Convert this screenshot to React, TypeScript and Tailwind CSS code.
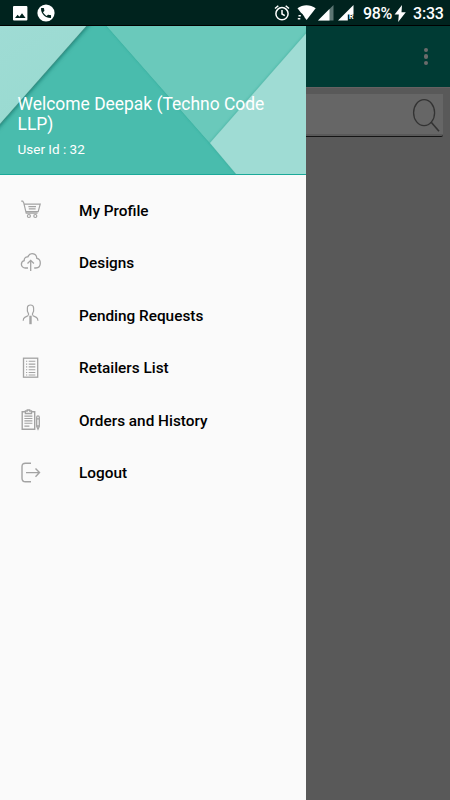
import React from 'react';

interface MenuItem {
  label: string;
  icon: React.ReactNode;
}

const iconProps = {
  width: 22,
  height: 22,
  viewBox: '0 0 22 22',
  fill: 'none',
  stroke: '#a3a3a3',
  strokeWidth: 1.1,
};

const CartIcon = () => (
  <svg {...iconProps} strokeWidth={1.2}>
    <path d="M1.2 2.2h1.500l1 1.500L6.200 14.100h11.400M4 5.100h16.200l-2 7.600H5.600" />
    <path d="M8.400 7.700h7.600M8.800 9.900h6.800" />
    <circle cx="8.9" cy="17" r="1.5" />
    <circle cx="15.3" cy="17" r="1.5" />
  </svg>
);

const CloudIcon = () => (
  <svg {...iconProps} strokeWidth={1.3}>
    <path d="M8 16H5.3C3 16 1.4 14.3 1.4 12.3c0-1.9 1.1-3.2 2.8-3.600-.2-2.400 1.300-4 3.600-3.800C8.700 2.800 10.200 1.700 12 1.700c2.800 0 4.600 1.900 4.900 4.700 2.100.4 3.400 2.300 3.400 4.600 0 2.900-1.800 5-4.500 5h-1.600" />
    <path d="M10.7 19V8.500M7.500 11.500l3.200-3.200 3.200 3.200" />
  </svg>
);

const PersonIcon = () => (
  <svg {...iconProps} strokeWidth={1.2}>
    <path d="M8.500 11.300V9.700L7.400 7.200V3.900C7.400 2 8.600 1 10.500 1s3.100 1 3.100 2.900v3.300l-1.100 2.500v1.600" />
    <path d="M8.400 11.500 4.800 13.400C3.700 14 3.200 15 3.200 16.800M12.600 11.500l3.700 1.900c1.100.6 1.600 1.600 1.600 3.400" />
    <path d="M10.500 11.700v8.500" strokeWidth="2.400" />
  </svg>
);

const ListIcon = () => (
  <svg {...iconProps}>
    <rect x="3.5" y="1.2" width="14.2" height="19" strokeWidth="1.3" />
    <path d="M8.7 4.3h6.6M8.7 7.1h6.6M8.7 9.9h6.6M8.7 12.7h6.6M8.7 15.5h6.6M8.7 18h6.6" />
    <path d="M6 4.3h1.2M6 7.1h1.2M6 9.9h1.2M6 12.7h1.2M6 15.5h1.2M6 18h1.2" />
  </svg>
);

const ClipboardIcon = () => (
  <svg {...iconProps}>
    <path d="M5.4 2.7H2.2v17.5h12.5V2.7h-3.2" strokeWidth="1.4" />
    <path d="M5.4 4.5V2h1.8V1h2.5v1h1.8v2.5z" strokeWidth="1.3" />
    <path d="M4.4 7.1h8M4.4 9.5h8M4.4 11.9h8M4.4 14.3h8M4.4 17.1h5" />
    <path d="M16.7 17.4V8.2c0-.8.5-1.3 1.3-1.3s1.3.5 1.3 1.3v9.2L18 20.2zM16.7 9.8h2.6M16.7 17h2.6" strokeWidth="1.3" />
  </svg>
);

const LogoutIcon = () => (
  <svg {...iconProps} strokeWidth={1.4}>
    <path d="M11 1.2H5.5C3.2 1.2 2 2.4 2 4.7v11.5c0 2.3 1.2 3.5 3.5 3.5H11" />
    <path d="M6 10.6h13.4M15.5 6.5l4 4.1-4 4.1" />
  </svg>
);

const menuItems: MenuItem[] = [
  { label: 'My Profile', icon: <CartIcon /> },
  { label: 'Designs', icon: <CloudIcon /> },
  { label: 'Pending Requests', icon: <PersonIcon /> },
  { label: 'Retailers List', icon: <ListIcon /> },
  { label: 'Orders and History', icon: <ClipboardIcon /> },
  { label: 'Logout', icon: <LogoutIcon /> },
];

const StatusBar: React.FC = () => (
  <div className="flex h-[26px] items-center border-b border-black bg-[#00231e] pr-[7px] pl-[13px] text-white">
    <svg width="15" height="15" viewBox="0 0 15 15" className="mt-[1px]">
      <rect width="14.4" height="14.6" rx="1" fill="#fff" />
      <path d="M2 12 4.6 8.7l1.8 2 2.6-3.4 3.6 4.7z" fill="#00231e" />
    </svg>
    <svg width="18" height="18" viewBox="0 0 18 18" className="mt-[1px] ml-[9px]">
      <circle cx="9" cy="9" r="8.6" fill="#fff" />
      <path
        transform="translate(2.3 2.3) scale(.56)"
        d="M6.6 10.8c1.4 2.8 3.8 5.1 6.6 6.6l2.2-2.2c.3-.3.7-.4 1-.2 1.1.4 2.3.6 3.6.6.6 0 1 .4 1 1V20c0 .6-.4 1-1 1C10.6 21 3 13.4 3 4c0-.6.4-1 1-1h3.5c.6 0 1 .4 1 1 0 1.2.2 2.4.6 3.6.1.3 0 .7-.2 1z"
        fill="#00231e"
      />
    </svg>
    <div className="flex-1" />
    <svg width="16" height="18" viewBox="0 0 16 18" fill="none" stroke="#fff" strokeWidth="1.5">
      <circle cx="8" cy="9.7" r="6.1" />
      <path d="M8 6v4l2.8 1.7M1 4.5 4.3 1.7M15 4.5l-3.3-2.8" />
    </svg>
    <svg width="19" height="16" viewBox="0 0 19 16" fill="#fff" className="mt-[1px] ml-[7px]">
      <path d="M.5 3.3C5.8-.9 13.2-.9 18.7 3.3L9.6 15z" />
      <path d="M0 8.5h5l2.5 3.5L5 15H0z" fill="#00231e" />
      <path d="M1.5 10h2.3v1.4H1.5zM.8 13h2.5v1.4H.8z" />
    </svg>
    <svg width="16" height="16" viewBox="0 0 16 16" className="mt-[1px] ml-[2px]">
      <path d="M15.5 0v15.5H0z" fill="#5c7673" />
      <path d="M11.5 4v11.5H0z" fill="#fff" />
    </svg>
    <svg width="17" height="16" viewBox="0 0 17 16" className="mt-[1px] ml-[4px]">
      <path d="M15.5 0v15.5H0z" fill="#fff" />
      <path d="M9.8 9.5H17V16H9.8z" fill="#00231e" />
    </svg>
    <span className="mt-[10px] -ml-[6px] w-[6px] text-[7px] leading-[7px] font-bold">R</span>
    <span className="mt-[2px] ml-[8px] w-[30px] text-[16px] leading-[18px] font-medium tracking-[-0.3px]">98%</span>
    <svg width="13" height="17" viewBox="0 0 13 17" fill="#fff" className="mt-[1px] ml-[1px]">
      <path d="M8 0 .6 9.6h4.2L4.2 17l7.6-9.8H7.5z" />
    </svg>
    <span className="mt-[2px] ml-[6px] w-[30px] text-[16px] leading-[18px] font-medium tracking-[-0.2px]">3:33</span>
  </div>
);

const DrawerHeader: React.FC = () => (
  <div className="relative h-[149px] overflow-hidden border-b border-[#1ba999] bg-[#49bcad]">
    <svg className="absolute inset-0" width="306" height="149" viewBox="0 0 306 149">
      <defs>
        <filter id="shadow" x="-20%" y="-20%" width="140%" height="140%">
          <feDropShadow dx="1" dy="1" stdDeviation="2" floodColor="#0d6258" floodOpacity="0.75" />
        </filter>
        <filter id="soft" x="-20%" y="-20%" width="140%" height="140%">
          <feDropShadow dx="-1" dy="0" stdDeviation="1.3" floodColor="#2aa392" floodOpacity="0.5" />
        </filter>
        <linearGradient id="light" x1="0" y1="0" x2="0.5" y2="1">
          <stop offset="0" stopColor="#a0dcd5" />
          <stop offset="1" stopColor="#98dad0" />
        </linearGradient>
      </defs>
      <path d="M106 -1H308V60L210 117z" fill="#6ac9bb" filter="url(#soft)" />
      <path d="M106 -1H308L306 8L210 117z" fill="#6ac9bb" />
      <path d="M310 3V155H242L210 117z" fill="#9fdcd4" filter="url(#soft)" />
      <path d="M-10 -10H95L-10 109z" fill="url(#light)" filter="url(#shadow)" />
    </svg>
    <div className="relative pt-[68px] pl-[17.5px] text-white">
      <p className="w-[260px] text-[17.45px] leading-[20px]">Welcome Deepak (Techno Code LLP)</p>
      <p className="mt-[7px] text-[13.5px] leading-4">User Id : 32</p>
    </div>
  </div>
);

const App: React.FC = () => {
  return (
    <div className="relative h-[800px] w-[450px] overflow-hidden bg-[#595959] font-['Roboto',sans-serif]">
      <StatusBar />

      {/* Dimmed page */}
      <div className="flex h-[61px] items-center justify-end bg-[#003b34] pr-[22px]">
        <div className="flex flex-col gap-[2px]">
          <span className="h-[4.5px] w-[4.5px] rounded-full bg-[#6b6b6b]" />
          <span className="h-[4.5px] w-[4.5px] rounded-full bg-[#6b6b6b]" />
          <span className="h-[4.5px] w-[4.5px] rounded-full bg-[#6b6b6b]" />
        </div>
      </div>
      <div className="border-t border-[#666162] px-[7px] pt-[6px]">
        <div className="flex h-[43px] justify-end rounded-br-[2px] border-b border-[#151515] bg-[#595959]">
          <div className="flex h-10 w-full justify-end bg-[#666]">
            <svg width="32" height="40" viewBox="0 0 32 40" fill="none" stroke="#333" strokeWidth="1.3">
              <ellipse cx="13.1" cy="18.7" rx="10.5" ry="13" />
              <path d="M20 28 28 37.3" strokeWidth="1.6" />
            </svg>
          </div>
        </div>
      </div>

      {/* Navigation drawer */}
      <div className="absolute top-[26px] left-0 h-[774px] w-[306px] bg-[#fafafa]">
        <DrawerHeader />
        <nav className="pt-[9px]">
          {menuItems.map((item) => (
            <div key={item.label} className="flex h-[52.5px] items-center pl-5">
              {item.icon}
              <span className="mt-[0.7px] ml-[37px] text-[15.35px] leading-5 font-medium text-black">{item.label}</span>
            </div>
          ))}
        </nav>
      </div>
    </div>
  );
};

export default App;
